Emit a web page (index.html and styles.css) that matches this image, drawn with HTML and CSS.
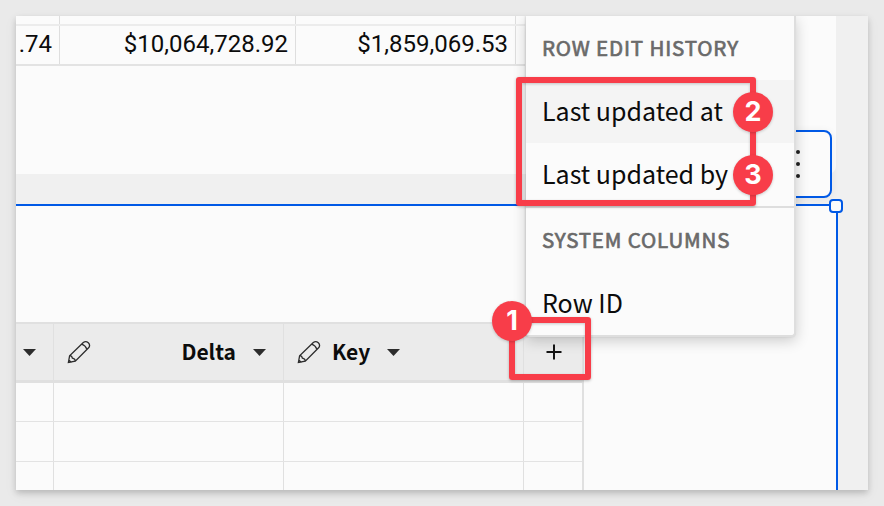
FILE: index.html
```
<!DOCTYPE html>
<html lang="en">
<head>
<meta charset="utf-8">
<title>Input table columns</title>
<link rel="stylesheet" href="styles.css">
</head>
<body>
<svg class="defs" aria-hidden="true">
  <symbol id="pencil" viewBox="0 0 24 24">
    <path d="M1.4 22.5 2.6 15.8 16.3 2.6Q18.8.6 21.3 2.8 23.7 5.3 21.6 7.8L8.3 21.2Z M2.8 15.6Q4.8 15.5 5.4 18.2 8.2 18.9 8.3 21 M14.8 4.2Q18.6 5.6 19.9 9.4 M1.4 22.5 1.9 20 4 22Z"/>
  </symbol>
  <symbol id="caret" viewBox="0 0 13 7"><path d="M0 0H13L6.5 7Z"/></symbol>
</svg>
<main class="frame">
  <section class="summary">
    <div class="row short"><span></span><span></span><span></span><span></span></div>
    <div class="row"><span>.74</span><span>$10,064,728.92</span><span>$1,859,069.53</span><span></span></div>
  </section>
  <section class="element">
    <div class="table">
      <div class="line head">
        <div class="first"><svg class="caret"><use href="#caret"/></svg></div>
        <div class="delta"><svg class="pencil"><use href="#pencil"/></svg><b>Delta</b><svg class="caret"><use href="#caret"/></svg></div>
        <div class="key"><svg class="pencil"><use href="#pencil"/></svg><b>Key</b><svg class="caret"><use href="#caret"/></svg></div>
        <div class="add"><svg class="plus" viewBox="0 0 16 16"><path d="M8 .5V15.5M.5 8H15.5"/></svg></div>
      </div>
      <div class="line r1"><i></i><i></i><i></i><i></i></div>
      <div class="line r2"><i></i><i></i><i></i><i></i></div>
      <div class="line r3"><i></i><i></i><i></i><i></i></div>
    </div>
  </section>
  <div class="handle"></div>
  <div class="toolbar"><i></i><i></i><i></i></div>
  <nav class="menu">
    <h2 class="t-history"><span>ROW EDIT HISTORY</span></h2>
    <div class="item hover"><span>Last updated at</span></div>
    <div class="item"><span>Last updated by</span></div>
    <h2 class="t-system"><span>SYSTEM COLUMNS</span></h2>
    <div class="item"><span>Row ID</span></div>
  </nav>
  <div class="mark mark-items"></div>
  <div class="mark mark-add"></div>
  <div class="badge b1">1</div>
  <div class="badge b2">2</div>
  <div class="badge b3">3</div>
</main>
</body>
</html>
```
FILE: styles.css
```
* { box-sizing: border-box; }
body {
  margin: 0;
  padding: 16px;
  height: 506px;
  overflow: hidden;
  background: #eaeaea;
  color: #0c0c0c;
  font-family: "Noto Sans CJK SC", "Noto Sans", sans-serif;
}
.defs { position: absolute; width: 0; height: 0; }
.frame {
  position: relative;
  width: 852px;
  height: 474px;
  overflow: hidden;
  background: #f0f0f0;
}
body::before {
  content: "";
  position: absolute;
  left: 16px; top: 16px;
  width: 852px; height: 474px;
  box-shadow: 0 3px 6px rgba(0,0,0,.18), 0 4px 14px rgba(0,0,0,.05);
}

.summary {
  width: 820px;
  height: 158px;
  background: #fbfbfb;
  border-bottom-right-radius: 8px;
}
.row {
  display: grid;
  grid-template-columns: 44px 236px 220px 9px;
  width: 509px;
  height: 40px;
  border-bottom: 2px solid #e3e3e3;
}
.row.short { height: 10px; border-color: #ececec; }
.row span {
  border-right: 1px solid #dedede;
  padding-right: 7px;
  text-align: right;
  font: 24px/36px Roboto, sans-serif;
  overflow: hidden;
  white-space: nowrap;
}
.row span:last-child { border: 0; padding: 0; }

.element {
  width: 822px;
  height: 286px;
  margin-top: 30px;
  padding-top: 116px;
  background: #fbfbfb;
  border-top: 2px solid #0059e6;
  border-right: 2px solid #0059e6;
}
.table { width: 568px; border-top: 2px solid #e0e0e0; border-right: 2px solid #e0e0e0; }
.line { display: grid; grid-template-columns: 38px 230px 240px 58px; }
.line > * { border-right: 1px solid #e0e0e0; }
.line > :last-child { border-right: 0; }
.head { height: 59px; background: #ebebeb; border-bottom: 3px solid #e0e0e0; }
.head > div { display: flex; align-items: center; }
.head b { font-size: 21px; font-weight: 700; line-height: 30px; padding-bottom: 2px; }
.r1, .r2 { border-bottom: 1px solid #e3e3e3; }
.r1 { height: 39px; }
.r2 { height: 40px; }
.r3 { height: 30px; }
.caret { width: 13px; height: 7px; fill: #2c2c2c; flex: none; }
.pencil { width: 24px; height: 24px; fill: none; stroke: #2c2c2c; stroke-width: 1.3; flex: none; }
.first { padding-left: 6.5px; }
.delta { padding: 0 17.5px 0 13px; }
.delta b { margin-left: auto; margin-right: 16.5px; }
.key { padding-left: 13px; }
.key b { margin: 0 17px 0 11px; }
.key .caret { margin-left: -.5px; }
.add { justify-content: center; padding-left: 1px; }
.plus { width: 16px; height: 16px; stroke: #151515; stroke-width: 2; }

.handle {
  position: absolute;
  left: 813px; top: 183px;
  width: 14px; height: 14px;
  background: #fbfbfb;
  border: 2px solid #0059e6;
  border-radius: 4px;
}
.toolbar {
  position: absolute;
  left: 740px; top: 114px;
  width: 76px; height: 68px;
  background: #fbfbfb;
  border: 2px solid #0059e6;
  border-radius: 8px;
  box-shadow: 0 1px 8px rgba(0,0,0,.06);
  display: flex;
  flex-direction: column;
  justify-content: center;
  gap: 8px;
  padding-left: 38px;
}
.toolbar i { width: 4px; height: 4px; border-radius: 50%; background: #222; }

.menu {
  position: absolute;
  left: 510px; top: 0;
  width: 270px; height: 321px;
  background: #fbfbfb;
  border-right: 2px solid #dedede;
  border-bottom: 2px solid #dedede;
  border-bottom-right-radius: 4px;
  border-bottom-left-radius: 4px;
  box-shadow: -1px 0 2px rgba(0,0,0,.12), 0 4px 14px rgba(0,0,0,.19);
}
.menu h2, .item { margin: 0; display: flex; align-items: center; padding-left: 16px; white-space: nowrap; }
.menu h2 {
  height: 64px;
  padding-bottom: 2px;
  color: #6a6a6a;
  font-size: 20.5px;
  font-weight: 400;
  line-height: 30px;
  letter-spacing: .85px;
  -webkit-text-stroke: .7px #6a6a6a;
}
.item { height: 63px; padding-bottom: 4px; font-size: 25px; line-height: 36px; }
.hover { background: #f4f4f4; }
.menu .t-system { height: 66px; border-top: 2px solid #dedede; }

.mark {
  position: absolute;
  border: 6px solid #f83d49;
  border-radius: 3px;
  box-shadow: 0 1px 3px rgba(0,0,0,.25), inset 0 1px 3px rgba(0,0,0,.2);
}
.mark-items { left: 500px; top: 61px; width: 240px; height: 129px; }
.mark-add { left: 493px; top: 301px; width: 82px; height: 63px; }
.badge {
  position: absolute;
  width: 40px; height: 40px;
  border-radius: 50%;
  background: #f83d49;
  box-shadow: 0 1px 3px rgba(0,0,0,.2);
  color: #fff;
  font: 700 27px/40px Inter, sans-serif;
  text-align: center;
}
.b1 { left: 476px; top: 285px; }
.b2 { left: 717px; top: 76px; }
.b3 { left: 717px; top: 139px; }
```
